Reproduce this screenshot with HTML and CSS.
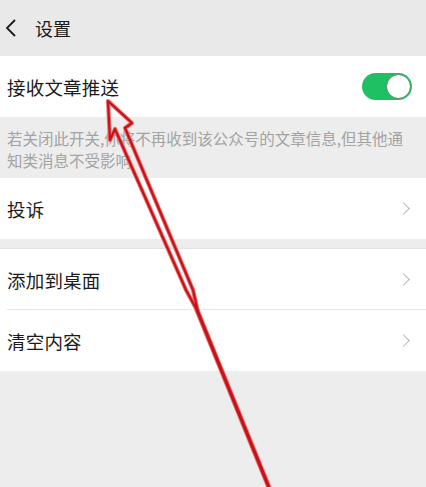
FILE: index.html
```html
<!DOCTYPE html>
<html lang="zh-CN">
<head>
<meta charset="utf-8">
<link rel="stylesheet" href="styles.css">
</head>
<body>
<div class="page">
  <header class="topbar">
    <svg class="back" width="12" height="18" viewBox="0 0 12 18"><path d="M10 1 L2 9 L10 17" fill="none" stroke="#1a1a1a" stroke-width="1.8"/></svg>
    <span class="title">设置</span>
  </header>
  <div class="row first">
    <span class="label">接收文章推送</span>
    <span class="toggle"><span class="knob"></span></span>
  </div>
  <p class="desc">若关闭此开关,你将不再收到该公众号的文章信息,但其他通知类消息不受影响</p>
  <div class="group">
    <div class="row"><span class="label">投诉</span><span class="chev"></span></div>
  </div>
  <div class="group gap">
    <div class="row sep"><span class="label">添加到桌面</span><span class="chev"></span></div>
    <div class="row"><span class="label">清空内容</span><span class="chev"></span></div>
  </div>
  <svg class="arrow" width="426" height="487" viewBox="0 0 426 487">
    <g fill="none" stroke-linejoin="round" stroke-linecap="round">
      <polygon points="108,101 132,123 125,128 193,290 198,312 186,290 115,129 110,140" stroke="#f26b6b" stroke-width="4.2"/>
      <line x1="197" y1="310" x2="270" y2="490" stroke="#f26b6b" stroke-width="5"/>
      <polygon points="108,101 132,123 125,128 193,290 198,312 186,290 115,129 110,140" stroke="#c4141b" stroke-width="2.2"/>
      <line x1="197" y1="310" x2="270" y2="490" stroke="#c4141b" stroke-width="3.2"/>
    </g>
  </svg>
</div>
</body>
</html>
```
FILE: styles.css
```css
* { box-sizing: border-box; }
html, body { margin: 0; padding: 0; }
body {
  width: 426px;
  height: 487px;
  overflow: hidden;
  background: #ededed;
  font-family: "Noto Sans CJK SC", "Noto Sans", sans-serif;
  color: #1b1b1b;
}
.page { position: relative; width: 426px; height: 487px; }
.topbar {
  height: 56px;
  background: #e9e9e9;
  display: flex;
  align-items: center;
  padding-left: 5px;
}
.back { display: block; margin-right: 18px; }
.title { font-size: 18px; line-height: 1; }
.row {
  height: 61px;
  background: #fff;
  display: flex;
  align-items: center;
  justify-content: space-between;
  padding: 0 14px 0 7px;
  position: relative;
}
.label { font-size: 18.5px; letter-spacing: 0.2px; }
.toggle {
  width: 50px;
  height: 27px;
  border-radius: 14px;
  background: #1fbf63;
  position: relative;
}
.knob {
  position: absolute;
  right: 1px;
  top: 1px;
  width: 25px;
  height: 25px;
  border-radius: 50%;
  background: #fff;
  border: 1.5px solid #4f8a63;
}
.desc {
  margin: 0;
  padding: 10px 20px 10px 7px;
  height: 61px;
  font-size: 15.5px;
  line-height: 22px;
  color: #a3a3a3;
}
.group { background: #fff; }
.gap { margin-top: 9px; border-top: 1px solid #e3e3e3; }
.sep::after {
  content: "";
  position: absolute;
  left: 7px;
  right: 0;
  bottom: 0;
  height: 1px;
  background: #e6e6e6;
}
.chev {
  width: 9px;
  height: 9px;
  border-top: 1.5px solid #b5b5b5;
  border-right: 1.5px solid #b5b5b5;
  transform: rotate(45deg);
  margin-right: 4px;
}
.arrow { position: absolute; left: 0; top: 0; pointer-events: none; }
```
